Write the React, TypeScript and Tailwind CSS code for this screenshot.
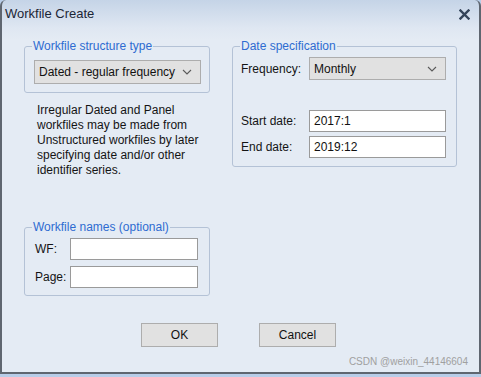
import React from "react";

const font = { fontFamily: '"Liberation Sans", Arial, sans-serif' };

function Chevron() {
  return (
    <svg width="10" height="6" viewBox="0 0 10 6" className="shrink-0">
      <polyline points="1,1 5,5 9,1" fill="none" stroke="#5a5a5a" strokeWidth="1.1" />
    </svg>
  );
}

function Select({ value, className }: { value: string; className: string }) {
  return (
    <div
      className={
        "flex items-center justify-between bg-[#e1e1e1] border border-[#adadad] pl-[4px] pr-[8px] text-[12px] text-[#111]" +
        " " +
        className
      }
    >
      <span>{value}</span>
      <Chevron />
    </div>
  );
}

function Input({ value, className }: { value?: string; className: string }) {
  return (
    <div
      className={
        "flex items-center bg-white border border-[#9a9a9a] pl-[4px] text-[12px] text-[#111] " + className
      }
    >
      {value}
    </div>
  );
}

function Group({
  title,
  className,
  inner,
  children,
}: {
  title: string;
  className?: string;
  inner: string;
  children: React.ReactNode;
}) {
  return (
    <fieldset className={"border border-[#b4c2d6] rounded-[3px] p-0 " + (className ?? "")}>
      <legend className="ml-[7px] px-[1px] text-[12px] leading-[14px] text-[#2e6bd1]">{title}</legend>
      <div className={inner}>{children}</div>
    </fieldset>
  );
}

export default function App() {
  return (
    <div className="w-[481px] h-[377px] bg-[#b8cde8]" style={font}>
      <div className="relative w-[481px] h-[374px] flex flex-col rounded-t-[6px] border-l-2 border-r-2 border-b-2 border-[#5f6670] bg-[linear-gradient(to_bottom,#c5d4e7_0px,#dfe7f2_28px,#e4ebf4_40px,#e4ebf4_100%)]">
        {/* title bar */}
        <div className="h-[28px] flex items-center justify-between pl-[3px] pr-[9px]">
          <span className="text-[13px] text-[#1c2636]">Workfile Create</span>
          <svg width="11" height="11" viewBox="0 0 11 11">
            <path d="M1.5 1.5 L9.5 9.5 M9.5 1.5 L1.5 9.5" stroke="#34445a" strokeWidth="2.4" strokeLinecap="square" />
          </svg>
        </div>

        {/* body */}
        <div className="flex pl-[22px] pt-[11px] gap-[22px]">
          <div className="w-[186px] flex flex-col">
            <Group title="Workfile structure type" inner="pl-[9px] pr-[8px] pt-[7px] pb-[8px]">
              <Select value="Dated - regular frequency" className="w-[167px] h-[24px]" />
            </Group>
            <p className="mt-[10px] pl-[13px] text-[12px] leading-[15px] text-[#141414]">
              Irregular Dated and Panel
              <br />
              workfiles may be made from
              <br />
              Unstructured workfiles by later
              <br />
              specifying date and/or other
              <br />
              identifier series.
            </p>
            <Group title="Workfile names (optional)" className="mt-[42px]" inner="pl-[10px] pr-[11px] pt-[4px] pb-[7px]">
              <div className="flex flex-col gap-[6px]">
                <div className="flex items-center">
                  <span className="w-[35px] text-[12px] text-[#141414]">WF:</span>
                  <Input className="w-[128px] h-[22px]" />
                </div>
                <div className="flex items-center">
                  <span className="w-[35px] text-[12px] text-[#141414]">Page:</span>
                  <Input className="w-[128px] h-[22px]" />
                </div>
              </div>
            </Group>
          </div>

          <div className="w-[225px]">
            <Group title="Date specification" inner="pl-[8px] pr-[10px] pt-[4px] pb-[8px]">
              <div className="flex items-center">
                <span className="w-[68px] text-[12px] text-[#141414]">Frequency:</span>
                <Select value="Monthly" className="w-[137px] h-[23px]" />
              </div>
              <div className="flex items-center mt-[30px]">
                <span className="w-[68px] text-[12px] text-[#141414]">Start date:</span>
                <Input value="2017:1" className="w-[137px] h-[22px]" />
              </div>
              <div className="flex items-center mt-[4px]">
                <span className="w-[68px] text-[12px] text-[#141414]">End date:</span>
                <Input value="2019:12" className="w-[137px] h-[22px]" />
              </div>
            </Group>
          </div>
        </div>

        {/* buttons */}
        <div className="flex pl-[139px] gap-[41px] mt-[27px]">
          <button className="w-[77px] h-[24px] bg-[#e1e1e1] border border-[#adadad] text-[12px] text-[#111]">OK</button>
          <button className="w-[77px] h-[24px] bg-[#e1e1e1] border border-[#adadad] text-[12px] text-[#111]">Cancel</button>
        </div>

        <span className="absolute right-[11px] bottom-[3px] text-[10px] text-[#a0a0a0]">CSDN @weixin_44146604</span>
      </div>
    </div>
  );
}
